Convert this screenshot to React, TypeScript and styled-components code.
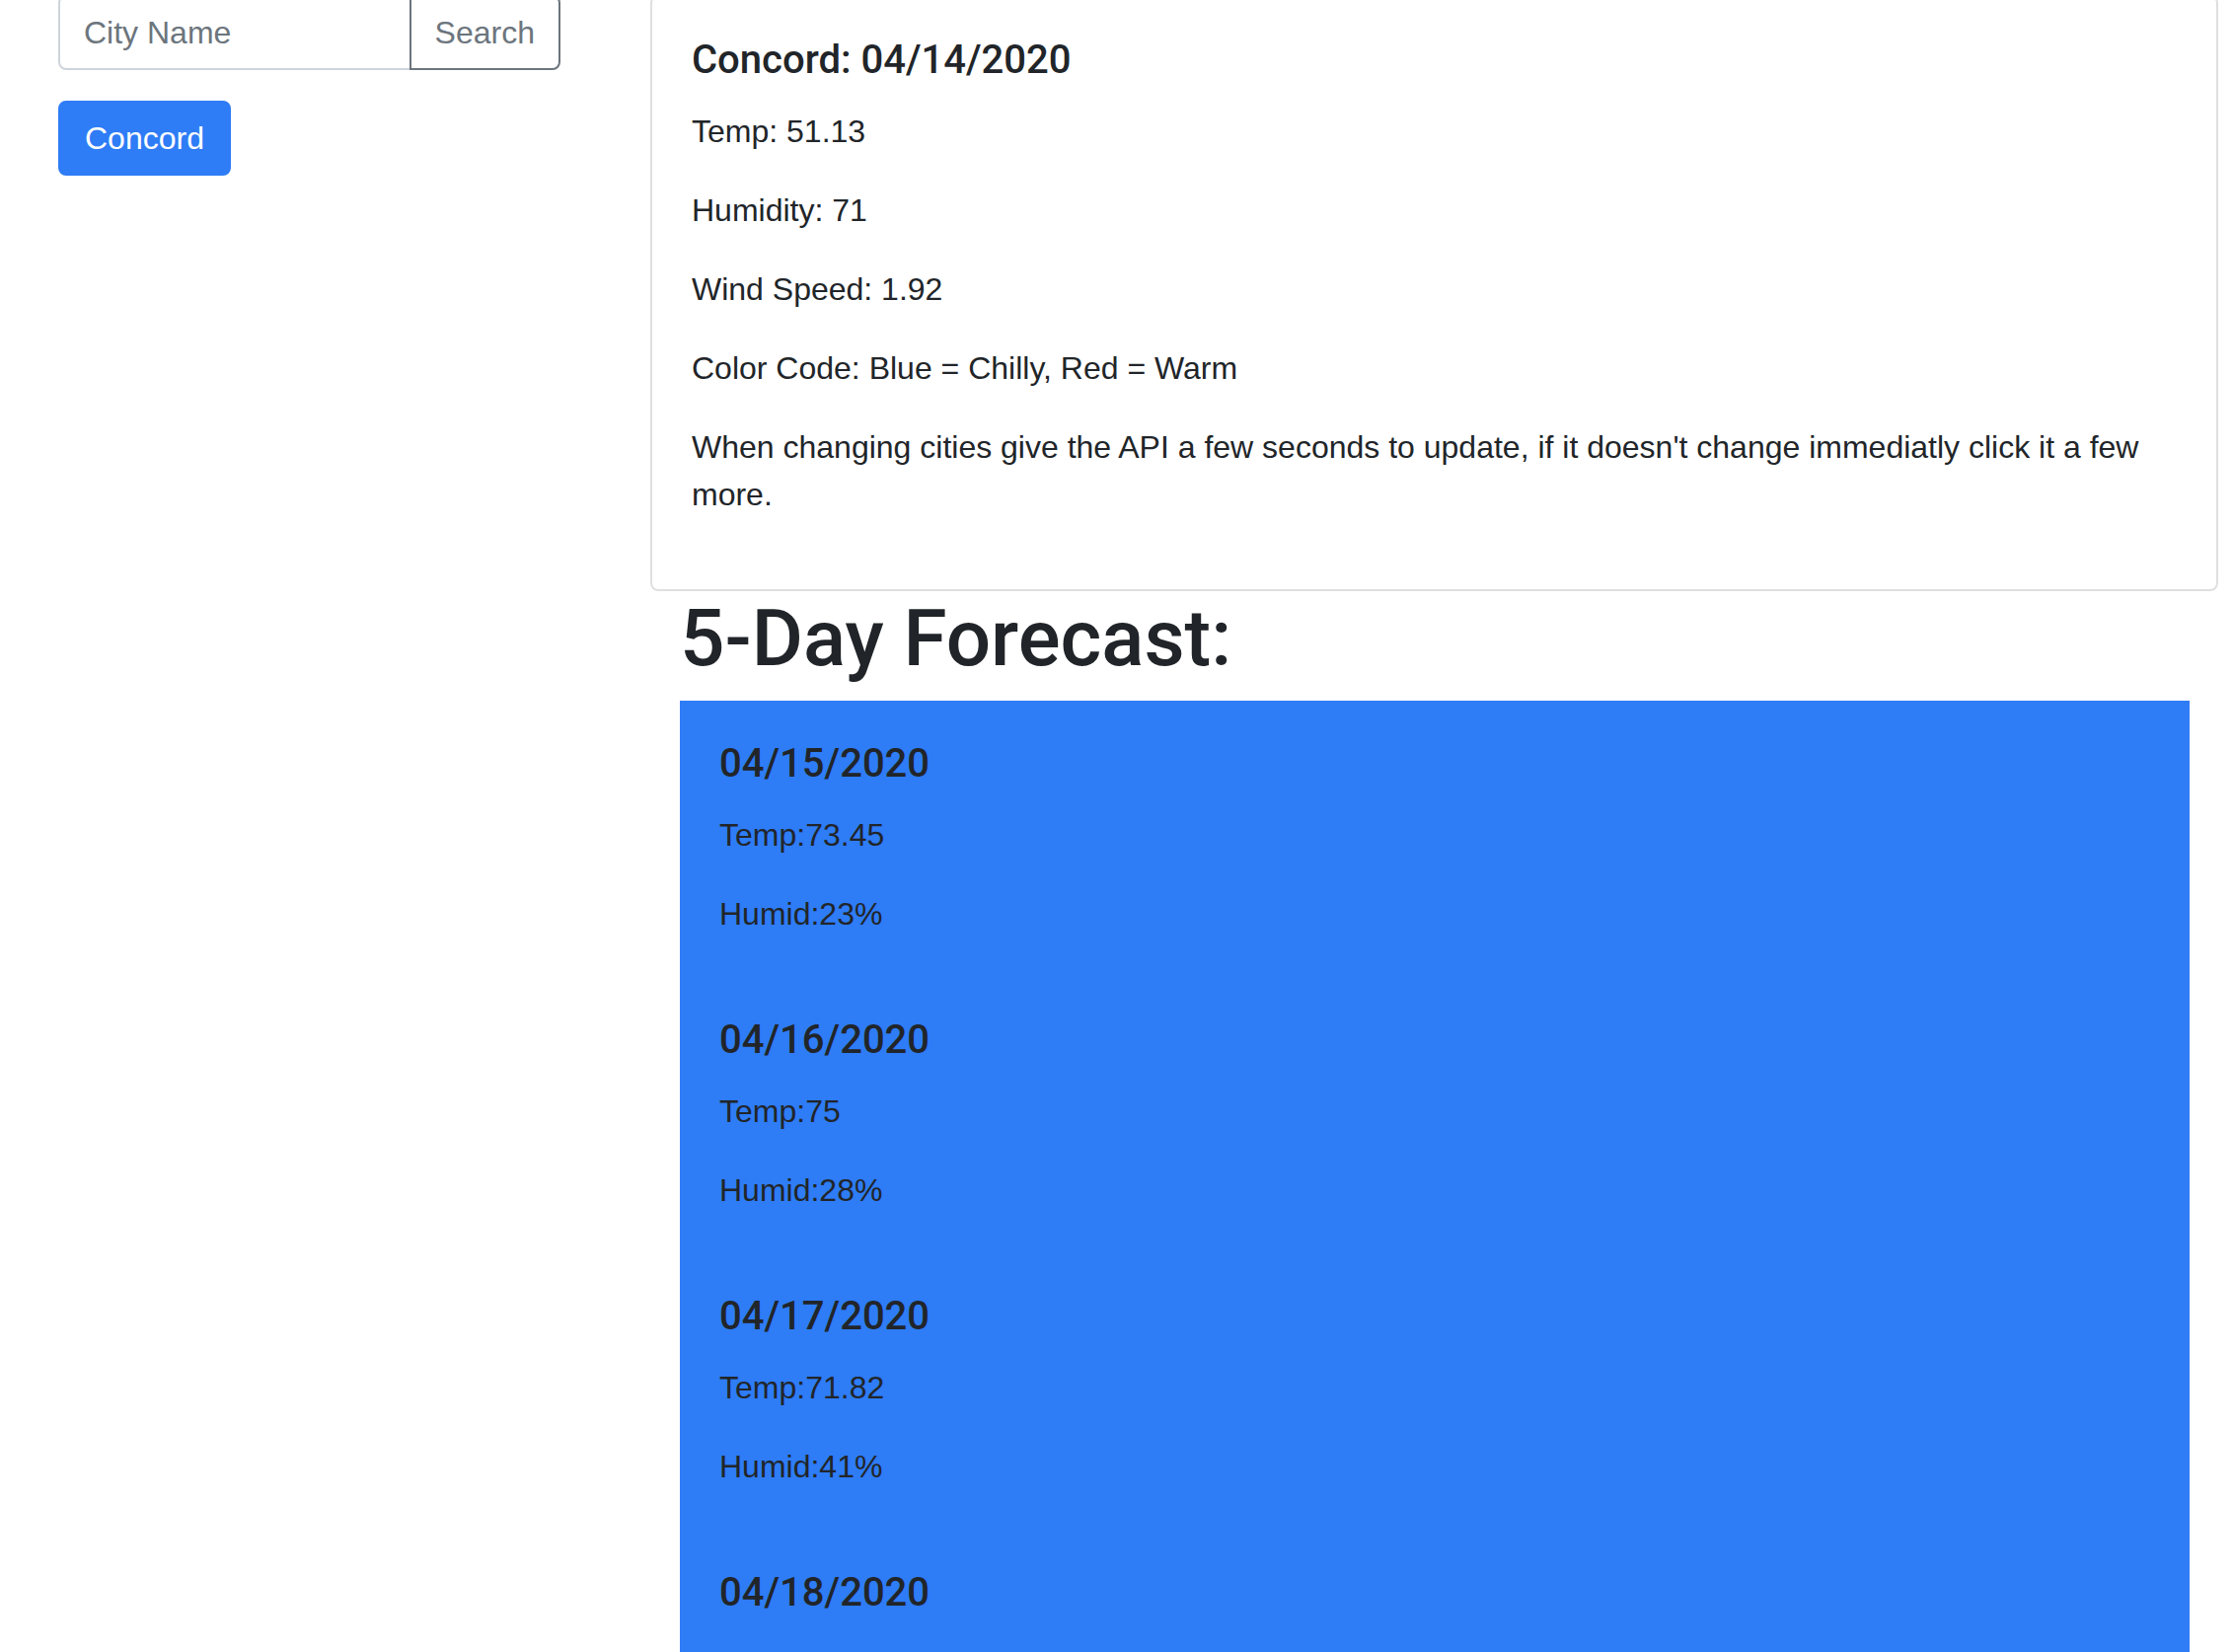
import React from 'react'
import styled, { createGlobalStyle } from 'styled-components'

const GlobalStyle = createGlobalStyle`
    body {
        margin: 0;
        font-family: 'Liberation Sans', Arial, sans-serif;
        font-size: 32px;
        line-height: 48px;
        color: #212529;
        background: #fff;
    }
`;

const primary = '#2e7cf6';
const headingFont = `Roboto, 'Liberation Sans', Arial, sans-serif`;

const Page = styled.div`
    display: grid;
    grid-template-columns: 509px 1589px;
    column-gap: 91px;
    align-items: start;
    padding-left: 59px;
    margin-top: -5px;
`;

const Sidebar = styled.div`
    display: flex;
    flex-direction: column;
    align-items: flex-start;
`;

const InputGroup = styled.div`
    display: flex;
    width: 100%;
    height: 76px;
`;

const CityInput = styled.input`
    flex: 1;
    min-width: 0;
    box-sizing: border-box;
    height: 76px;
    padding: 12px 24px;
    border: 2px solid #ced4da;
    border-radius: 8px 0 0 8px;
    font-family: inherit;
    font-size: 32px;
    color: #495057;
    outline: none;

    &::placeholder {
        color: #6c757d;
    }
`;

const SearchButton = styled.button`
    box-sizing: border-box;
    height: 76px;
    margin-left: -2px;
    padding: 12px 24px;
    border: 2px solid #6c757d;
    border-radius: 0 8px 8px 0;
    background: transparent;
    color: #6c757d;
    font-family: inherit;
    font-size: 32px;
    line-height: 48px;
`;

const CityButton = styled.button`
    margin-top: 31px;
    padding: 12px 25px;
    border: 2px solid ${primary};
    border-radius: 8px;
    background: ${primary};
    color: #fff;
    font-family: inherit;
    font-size: 32px;
    line-height: 48px;
`;

const Main = styled.div`
    display: flex;
    flex-direction: column;
`;

const Card = styled.div`
    border: 2px solid rgba(0, 0, 0, 0.125);
    border-radius: 8px;
    padding: 40px;
`;

const Title = styled.h5`
    margin: 0 0 24px;
    font-family: ${headingFont};
    font-size: 40px;
    line-height: 48px;
    font-weight: 500;
`;

const Text = styled.p`
    margin: 0 0 32px;
    font-size: 32px;
    line-height: 48px;
`;

const Forecast = styled.section`
    padding: 0 29px 0 30px;
`;

const ForecastHeading = styled.h1`
    margin: 0 0 15px;
    font-family: ${headingFont};
    font-size: 80px;
    line-height: 96px;
    font-weight: 500;
`;

const DayList = styled.div`
    background: ${primary};
`;

const Day = styled.div`
    padding: 40px 40px 8px;
`;

const days = [
    { date: '04/15/2020', temp: '73.45', humid: '23' },
    { date: '04/16/2020', temp: '75', humid: '28' },
    { date: '04/17/2020', temp: '71.82', humid: '41' },
    { date: '04/18/2020', temp: '69.8', humid: '37' },
];

const App = () => {
    return (
        <>
            <GlobalStyle />
            <Page>
                <Sidebar>
                    <InputGroup>
                        <CityInput placeholder="City Name" />
                        <SearchButton>Search</SearchButton>
                    </InputGroup>
                    <CityButton>Concord</CityButton>
                </Sidebar>
                <Main>
                    <Card>
                        <Title>Concord: 04/14/2020</Title>
                        <Text>Temp: 51.13</Text>
                        <Text>Humidity: 71</Text>
                        <Text>Wind Speed: 1.92</Text>
                        <Text>Color Code: Blue = Chilly, Red = Warm</Text>
                        <Text>When changing cities give the API a few seconds to update, if it doesn't change immediatly click it a few more.</Text>
                    </Card>
                    <Forecast>
                        <ForecastHeading>5-Day Forecast:</ForecastHeading>
                        <DayList>
                            {days.map(d => (
                                <Day key={d.date}>
                                    <Title>{d.date}</Title>
                                    <Text>Temp:{d.temp}</Text>
                                    <Text>Humid:{d.humid}%</Text>
                                </Day>
                            ))}
                        </DayList>
                    </Forecast>
                </Main>
            </Page>
        </>
    );
};

export default App;
